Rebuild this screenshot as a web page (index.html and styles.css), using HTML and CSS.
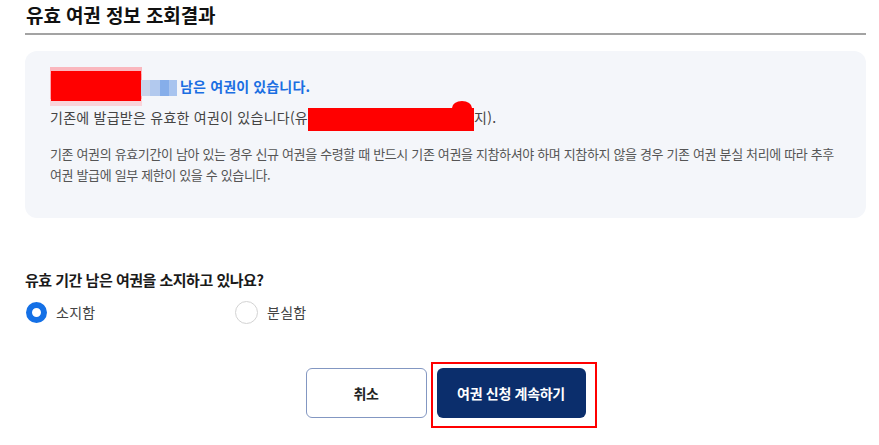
FILE: index.html
```html
<!DOCTYPE html>
<html lang="ko">
<head>
<meta charset="utf-8">
<title>유효 여권 정보 조회결과</title>
<link rel="stylesheet" href="styles.css">
</head>
<body>
<main class="page">
  <h1 class="title">유효 여권 정보 조회결과</h1>

  <section class="info-box">
    <div class="info-head">
      <span class="redact-name"></span>
      <span class="blur-pix"><i></i><i></i><i></i><i></i></span>
      <strong class="info-strong">남은 여권이 있습니다.</strong>
    </div>
    <p class="info-line">기존에 발급받은 유효한 여권이 있습니다(유<span class="redact-date"></span>지).</p>
    <p class="info-note">기존 여권의 유효기간이 남아 있는 경우 신규 여권을 수령할 때 반드시 기존 여권을 지참하셔야 하며 지참하지 않을 경우 기존 여권 분실 처리에 따라 추후 여권 발급에 일부 제한이 있을 수 있습니다.</p>
  </section>

  <h2 class="question">유효 기간 남은 여권을 소지하고 있나요?</h2>
  <div class="radios">
    <label class="radio"><span class="dot dot-on"></span><span class="radio-text">소지함</span></label>
    <label class="radio"><span class="dot dot-off"></span><span class="radio-text">분실함</span></label>
  </div>

  <div class="actions">
    <button class="btn btn-cancel" type="button">취소</button>
    <div class="btn-wrap">
      <button class="btn btn-primary" type="button">여권 신청 계속하기</button>
      <span class="highlight"></span>
    </div>
  </div>
</main>
</body>
</html>
```

FILE: styles.css
```css
* { box-sizing: border-box; }
html, body { margin: 0; padding: 0; background: #fff; }
body {
  font-family: "Noto Sans CJK KR", "Noto Sans", sans-serif;
  color: #222;
}
.page {
  width: 841px;
  margin-left: 25px;
  padding-bottom: 24px;
}
.title {
  margin: 2px 0 0;
  font-size: 19px;
  line-height: 26px;
  font-weight: 700;
  letter-spacing: -0.1px;
  color: #111;
  padding: 0 0 5px 1px;
  border-bottom: 2px solid #a3a3a3;
}
.info-box {
  margin-top: 16px;
  height: 167px;
  background: #f4f6fa;
  border-radius: 12px;
  padding: 20px 25px 0 25px;
}
.info-head {
  display: flex;
  align-items: center;
  height: 30px;
}
.redact-name {
  display: inline-block;
  width: 90px;
  height: 30px;
  margin-left: 1px;
  background: #ff0000;
  box-shadow: 0 -3px 0 1px rgba(255, 120, 130, 0.5), 0 4px 0 1px rgba(255, 170, 180, 0.45);
}
.blur-pix {
  display: inline-grid;
  grid-template-columns: 9px 10px 9px 8px;
  height: 16px;
  margin-left: 0;
  margin-top: 4px;
}
.blur-pix i:nth-child(1) { background: #c9d4ea; }
.blur-pix i:nth-child(2) { background: #b2c9ee; }
.blur-pix i:nth-child(3) { background: #86aeea; }
.blur-pix i:nth-child(4) { background: #a8c4ef; }
.info-strong {
  margin-left: 3px;
  font-size: 14px;
  font-weight: 700;
  color: #1a6ee2;
  letter-spacing: 0.15px;
}
.info-line {
  margin: 5px 0 0;
  font-size: 14px;
  line-height: 22px;
  color: #444;
  letter-spacing: 0.25px;
}
.redact-date {
  position: relative;
  display: inline-block;
  width: 166px;
  height: 23px;
  vertical-align: -8px;
  background: #ff0000;
}
.redact-date::after {
  content: "";
  position: absolute;
  right: 2px;
  top: -7px;
  width: 20px;
  height: 14px;
  border-radius: 50%;
  background: #ff0000;
}
.info-note {
  margin: 12px 0 0;
  font-size: 13px;
  line-height: 21px;
  color: #555;
  letter-spacing: -0.35px;
}
.question {
  margin: 51px 0 0;
  font-size: 15px;
  line-height: 22px;
  font-weight: 700;
  color: #1a1a1a;
  letter-spacing: -0.5px;
}
.radios {
  display: grid;
  grid-template-columns: 210px 200px;
  margin-top: 9px;
  height: 24px;
}
.radio {
  display: flex;
  align-items: center;
  gap: 9px;
  font-size: 14px;
  color: #444;
  letter-spacing: 0.3px;
}
.dot {
  display: inline-block;
  border-radius: 50%;
  background: #fff;
}
.dot-on {
  width: 21px;
  height: 21px;
  margin-left: 1px;
  border: 6px solid #1470e6;
}
.dot-off {
  width: 23px;
  height: 23px;
  border: 1px solid #d3d3d3;
}
.actions {
  display: flex;
  justify-content: center;
  gap: 10px;
  margin-top: 44px;
}
.btn {
  height: 50px;
  border-radius: 6px;
  font-family: inherit;
  font-size: 14px;
  font-weight: 700;
  letter-spacing: -0.3px;
  cursor: pointer;
}
.btn-cancel {
  width: 121px;
  background: #fff;
  border: 1px solid #8397c2;
  color: #222;
}
.btn-wrap {
  position: relative;
  height: 50px;
}
.btn-primary {
  display: block;
  width: 149px;
  background: #0b2e6c;
  border: none;
  color: #fff;
}
.highlight {
  position: absolute;
  left: -6px;
  top: -6px;
  width: 166px;
  height: 66px;
  border: 2px solid #ff0000;
  pointer-events: none;
}
```
